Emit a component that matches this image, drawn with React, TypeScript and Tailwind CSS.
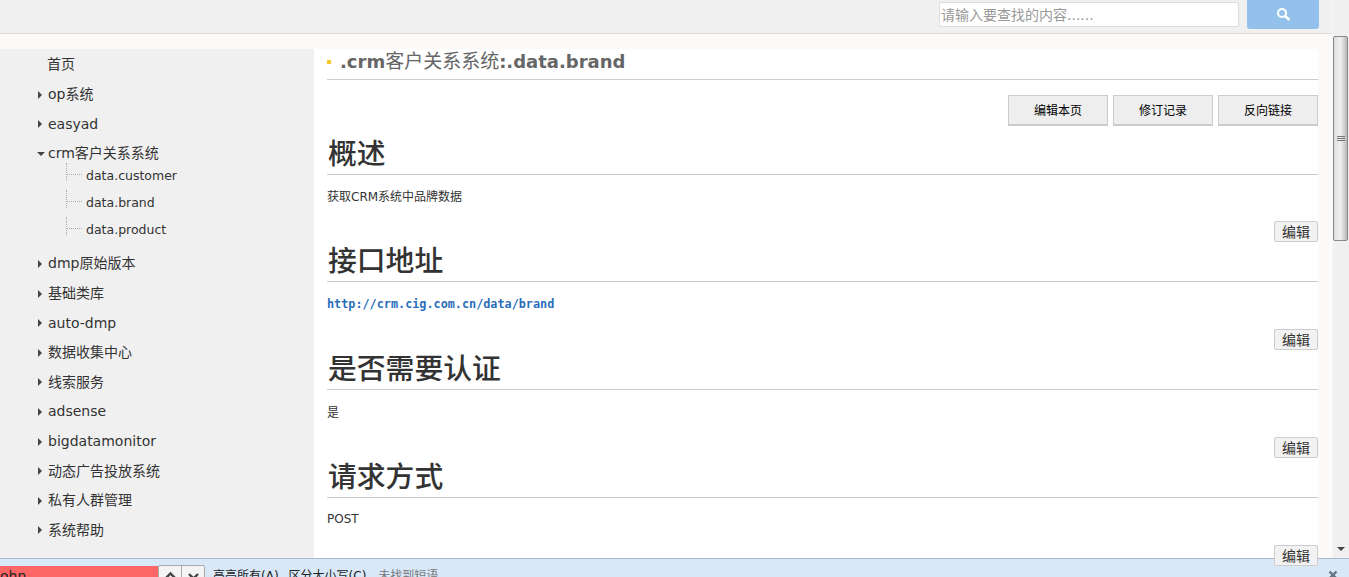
import React from "react";

const navTop = ["op系统", "easyad"];
const navBottom = [
  "dmp原始版本",
  "基础类库",
  "auto-dmp",
  "数据收集中心",
  "线索服务",
  "adsense",
  "bigdatamonitor",
  "动态广告投放系统",
  "私有人群管理",
  "系统帮助",
];
const children = ["data.customer", "data.brand", "data.product"];

const NavItem = ({ label, open }: { label: string; open?: boolean }) => (
  <div className="flex h-[29.6px] items-center pl-[37px] text-[14px] text-[#333]">
    {open ? (
      <span className="mr-[2px] h-0 w-0 border-x-[4px] border-t-[4px] border-x-transparent border-t-[#444]" />
    ) : (
      <span className="ml-[1px] mr-[5px] h-0 w-0 border-y-[4px] border-l-[4px] border-y-transparent border-l-[#444]" />
    )}
    <span className="ml-[1px]">{label}</span>
  </div>
);

const EditButton = () => (
  <button className="relative z-10 h-[21px] w-[44px] shrink-0 rounded-[2px] border border-[#ccc] bg-[#f2f2f2] text-[14px] leading-[18px] text-[#333]">
    编辑
  </button>
);

const Heading = ({ title }: { title: string }) => (
  <h2 className="h-[40px] border-b border-[#ccc] pl-px text-[28.8px] font-medium leading-[38px] text-[#333]">
    {title}
  </h2>
);

const Section = ({ title, children }: { title: string; children: React.ReactNode }) => (
  <section className="flex h-[108px] flex-col">
    <div className="flex h-[29px] items-start justify-end pt-[8px]">
      <EditButton />
    </div>
    <Heading title={title} />
    <div className="pt-[12px] text-[12px] leading-[18px] text-[#333]">{children}</div>
  </section>
);

export default function App() {
  return (
    <div className="flex h-[577px] w-[1349px] flex-col overflow-hidden bg-[#fbfaf8] font-['DejaVu_Sans','Noto_Sans_CJK_SC',sans-serif]">
      <div className="flex min-h-0 flex-1">
        <div className="flex min-w-0 flex-1 flex-col">
          {/* top bar */}
          <header className="flex h-[34px] shrink-0 items-start justify-end border-b border-[#dcdad7] bg-[#f0f0f0] pr-[13px]">
            <input
              placeholder="请输入要查找的内容......"
              className="mt-[2px] h-[25px] w-[300px] rounded-[2px] border border-[#ddd] bg-white px-[1px] text-[14px] placeholder:text-[#999]"
            />
            <button className="ml-[8px] flex h-[29px] w-[72px] items-center justify-center rounded-b-[3px] bg-[#93c1ec]">
              <svg width="15" height="15" viewBox="0 0 15 15" fill="none" stroke="white">
                <circle cx="6" cy="6" r="4" strokeWidth="2" />
                <path d="M9 9l4.5 4" strokeWidth="2.6" />
              </svg>
            </button>
          </header>

          <div className="flex min-h-0 flex-1 pt-[15px]">
            {/* sidebar */}
            <aside className="w-[314px] shrink-0 bg-[#f0f0f0] pt-[1px]">
              <div className="flex h-[30px] items-center pb-[2px] pl-[47px] text-[14px] text-[#333]">首页</div>
              {navTop.map((label) => (
                <NavItem key={label} label={label} />
              ))}
              <NavItem label="crm客户关系系统" open />
              <ul className="-mt-[6px] mb-[5.4px] ml-[66px]">
                {children.map((label) => (
                  <li key={label} className="flex h-[27px] items-center text-[12.5px] text-[#333]">
                    <span className="h-[18px] self-start border-l border-dotted border-[#aaa]" />
                    <span className="mb-[4px] mr-[4px] w-[15px] border-t border-dotted border-[#aaa]" />
                    {label}
                  </li>
                ))}
              </ul>
              {navBottom.map((label) => (
                <NavItem key={label} label={label} />
              ))}
            </aside>

            {/* content */}
            <main className="w-[1004px] shrink-0 bg-white pl-[13px]">
              <div className="flex h-[31px] items-start border-b border-[#ccc] pt-[1px]">
                <span className="mr-[9px] mt-[10px] h-[4px] w-[4px] bg-[#fcc72c]" />
                <h1 className="text-[18px] font-bold leading-[22px] text-[#666]">
                  .crm<span className="text-[19px] font-normal">客户关系系统</span>:.data.brand
                </h1>
              </div>
              <div className="flex h-[46px] items-start justify-end gap-[5px] pt-[15px]">
                {["编辑本页", "修订记录", "反向链接"].map((label) => (
                  <button
                    key={label}
                    className="h-[31px] w-[100px] border border-b-2 border-[#ccc] bg-[#eee] pt-[1px] text-[12px] text-black"
                  >
                    {label}
                  </button>
                ))}
              </div>
              <div className="mt-[9px]">
                <Heading title="概述" />
              </div>
              <div className="h-[38px] pt-[13px] text-[12px] leading-[18px] text-[#333]">获取CRM系统中品牌数据</div>
              <Section title="接口地址">
                <a className="mt-[1px] block font-['DejaVu_Sans_Mono',monospace] text-[11.8px] font-bold text-[#2a6ebb]">
                  http://crm.cig.com.cn/data/brand
                </a>
              </Section>
              <Section title="是否需要认证">
                <p className="mt-[2px]">是</p>
              </Section>
              <Section title="请求方式">POST</Section>
              <div className="flex justify-end pt-[8px]">
                <EditButton />
              </div>
            </main>
          </div>
        </div>

        {/* window scrollbar */}
        <div className="flex w-[17px] shrink-0 flex-col border-l border-[#f8f8f8] bg-[#f0f0f0] pr-[1px] pt-[36px]">
          <div className="flex h-[205px] flex-col items-center justify-center gap-[1px] rounded-[2px] border border-[#888] bg-gradient-to-r from-[#dedede] via-[#f0f0f0] to-[#b8b8b8]">
            <div className="h-px w-[8px] bg-[#777]" />
            <div className="h-px w-[8px] bg-[#777]" />
            <div className="h-px w-[8px] bg-[#777]" />
          </div>
          <div className="mb-[7px] mt-auto flex justify-center">
            <span className="h-0 w-0 border-x-[4px] border-t-[4px] border-x-transparent border-t-[#444]" />
          </div>
        </div>
      </div>

      {/* find bar */}
      <footer className="flex h-[19px] shrink-0 items-start overflow-hidden border-t border-[#a9b8c9] bg-[#d8e8f8] pt-[7px] text-[12px] text-[#222]">
        <div className="h-[24px] w-[158px] bg-[#ff6666] pt-[1px] text-[14px] leading-[18px] text-[#222]">ohn</div>
        <div className="-mt-px flex h-[24px] w-[47px] rounded-t-[2px] border border-[#aaa] bg-[#f4f4f4]">
          <span className="flex h-[12px] w-[23px] items-center justify-center border-r border-[#aaa] pt-[6px]">
            <svg width="13" height="8" viewBox="0 0 13 8" fill="none" stroke="#444" strokeWidth="2.4">
              <path d="M2 7l4.5-4.5L11 7" />
            </svg>
          </span>
          <span className="flex w-[22px] justify-center pt-[6px]">
            <svg width="13" height="8" viewBox="0 0 13 8" fill="none" stroke="#444" strokeWidth="2.4">
              <path d="M2 2l4.5 4.5L11 2" />
            </svg>
          </span>
        </div>
        <span className="ml-[8px] pt-[1px] leading-[18px]">高亮所有(A)</span>
        <span className="ml-[10px] pt-[1px] leading-[18px]">区分大小写(C)</span>
        <span className="ml-[12px] pt-[1px] leading-[18px] text-[#777]">未找到短语</span>
        <span className="ml-auto mr-[11px] mt-[4px]">
          <svg width="10" height="10" viewBox="0 0 10 10" stroke="#667380" strokeWidth="2.4">
            <path d="M1.5 1.5l7 7M8.5 1.5l-7 7" />
          </svg>
        </span>
      </footer>
    </div>
  );
}
